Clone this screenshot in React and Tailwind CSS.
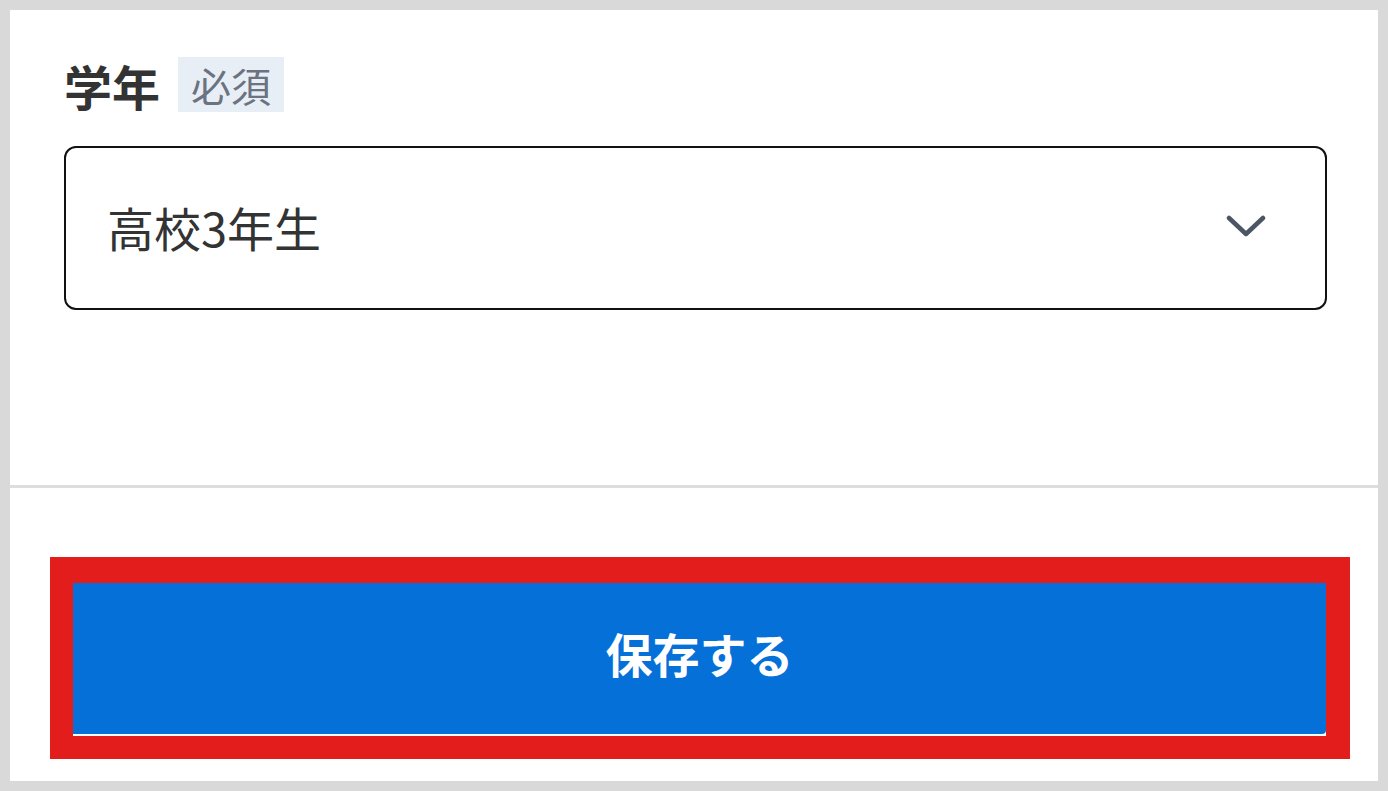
export default function App() {
  const font = { fontFamily: '"Noto Sans CJK JP", "Noto Sans", sans-serif' };
  return (
    <div className="w-[1388px] h-[791px] bg-[#d9d9d9] p-[10px]" style={font}>
      <div className="bg-white h-full flex flex-col">
        <div className="pl-[54px] pr-[51px] pt-[47px]">
          <div className="flex items-center gap-[18px] h-[55px]">
            <span className="text-[48px] leading-none font-bold text-[#333333]">学年</span>
            <span className="h-[55px] px-[13px] flex items-center bg-[#e8eef5] text-[#6b7280] text-[40px] leading-none">必須</span>
          </div>
          <div className="mt-[34px] h-[164px] border-2 border-[#111111] rounded-[12px] flex items-center justify-between pl-[41px] pr-[59px] pb-[4px]">
            <span className="text-[47px] leading-none text-[#333333]">高校3年生</span>
            <svg width="40" height="22" viewBox="0 0 40 22" fill="none">
              <path d="M3 3 L20 19 L37 3" stroke="#4b5563" strokeWidth="4.5" strokeLinecap="round" strokeLinejoin="round" />
            </svg>
          </div>
        </div>
        <div className="mt-[175px] h-[3px] bg-[#dddddd]" />
        <div className="mt-[69px] ml-[40px] mr-[28px] border-[#e31c1c] border-l-[23px] border-t-[26px] border-r-[24px] border-b-[23px] bg-white pb-[2px]">
          <button className="w-full h-[151px] bg-[#0670d9] rounded-br-[4px] flex items-center justify-center pb-[12px] text-white text-[47px] font-bold leading-none" style={font}>
            保存する
          </button>
        </div>
      </div>
    </div>
  );
}
